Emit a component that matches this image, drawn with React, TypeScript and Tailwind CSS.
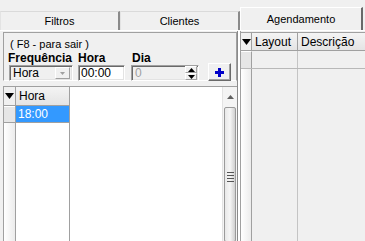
import React from "react";

const sunken = "border border-t-[#a0a0a0] border-l-[#a0a0a0] border-b-white border-r-white shadow-[inset_1px_1px_0_#696969,inset_-1px_-1px_0_#e3e3e3]";

function Tab({ label, width, active }: { label: string; width: string; active?: boolean }) {
    if (active) {
        return (
            <div className={`${width} h-[23px] -mb-[2px] flex items-start justify-center pt-[3px] bg-[#f0f0f0] border-t border-l border-white border-r-2 border-r-[#696969] relative z-10`}>
                {label}
            </div>
        );
    }
    return (
        <div className={`${width} h-[19px] mt-[2px] flex items-center justify-center bg-[#f0f0f0] border-t border-l border-[#e3e3e3] border-t-[#dadada] border-r-2 border-r-[#8a8a8a]`}>
            {label}
        </div>
    );
}

function HeaderArrow() {
    return (
        <svg width="9" height="6" viewBox="0 0 9 6">
            <path d="M0 0 H9 L4.5 6 Z" fill="#000" />
        </svg>
    );
}

export default function App() {
    return (
        <div
            className="w-[365px] h-[241px] bg-[#f0f0f0] overflow-hidden text-[11px] text-black select-none"
            style={{ fontFamily: '"Liberation Sans", Arial, sans-serif' }}
        >
            {/* tabs */}
            <div className="h-[9px]" />
            <div className="flex h-[21px] items-start">
                <Tab label="Filtros" width="w-[120px]" />
                <Tab label="Clientes" width="w-[120px]" />
                <div className="w-[123px] -mt-[2px]">
                    <Tab label="Agendamento" width="w-[123px]" active />
                </div>
            </div>
            <div className="h-px bg-white" />

            <div className="flex h-[211px]">
                {/* left side */}
                <div className="w-[237px] flex flex-col pl-[3px] pt-px">
                    <div className="h-[49px] border border-[#a0a0a0] border-b-white border-r-[#a0a0a0] pl-[5px] pt-[5px]">
                        <div className="leading-[13px] pl-[1px]">( F8 - para sair )</div>
                        <div className="flex mt-px">
                            <div className="w-[69px]">
                                <div className="font-bold text-[12px] leading-[12px] -ml-px">Frequência</div>
                                <div className={`mt-px w-[64px] h-[16px] ${sunken} bg-[#f0f0f0] flex items-center text-[12px]`}>
                                    <span className="pl-[3px] flex-1 leading-[12px]">Hora</span>
                                    <div className="w-[15px] h-[12px] mr-[2px] bg-[#f0f0f0] border border-white border-r-[#a0a0a0] border-b-[#a0a0a0] flex items-center justify-center">
                                        <svg width="5" height="3" viewBox="0 0 5 3">
                                            <path d="M0 0 H5 L2.5 3 Z" fill="#a0a0a0" />
                                        </svg>
                                    </div>
                                </div>
                            </div>
                            <div className="w-[53px]">
                                <div className="font-bold text-[12px] leading-[12px]">Hora</div>
                                <div className={`mt-px w-[47px] h-[16px] ${sunken} bg-white flex items-center pl-[2px] leading-[12px] text-[12px]`}>00:00</div>
                            </div>
                            <div className="w-[77px]">
                                <div className="font-bold text-[12px] leading-[12px] pl-px">Dia</div>
                                <div className={`mt-px w-[68px] h-[16px] ${sunken} bg-[#f0f0f0] flex items-center text-[12px]`}>
                                    <span className="pl-[3px] flex-1 text-[#a0a0a0] leading-[12px]">0</span>
                                    <div className="w-[12px] h-[14px] mr-px flex flex-col">
                                        <div className="flex-1 border border-white border-r-[#a0a0a0] border-b-[#a0a0a0] flex items-center justify-center">
                                            <svg width="7" height="4" viewBox="0 0 7 4">
                                                <path d="M0 4 H7 L3.5 0 Z" fill="#000" />
                                            </svg>
                                        </div>
                                        <div className="flex-1 border border-white border-r-[#a0a0a0] border-b-[#a0a0a0] flex items-center justify-center">
                                            <svg width="7" height="4" viewBox="0 0 7 4">
                                                <path d="M0 0 H7 L3.5 4 Z" fill="#000" />
                                            </svg>
                                        </div>
                                    </div>
                                </div>
                            </div>
                            <div className="w-[23px] h-[18px] -mt-px self-end bg-[#f0f0f0] border border-white border-r-[#696969] border-b-[#696969] shadow-[inset_-1px_-1px_0_#a0a0a0] flex items-center justify-center">
                                <svg width="9" height="9" viewBox="0 0 9 9">
                                    <path d="M3 0 H6 V3 H9 V6 H6 V9 H3 V6 H0 V3 H3 Z" fill="#0000c8" />
                                </svg>
                            </div>
                        </div>
                    </div>

                    {/* hours grid */}
                    <div className="mt-[5px] flex-1 flex border-t border-l border-[#a0a0a0] bg-white">
                        <div className="w-[12px] flex flex-col border-r border-[#a0a0a0]">
                            <div className="h-[19px] bg-[#f0f0f0] border-b border-[#a0a0a0] flex items-center justify-center">
                                <HeaderArrow />
                            </div>
                            <div className="h-[17px] bg-[#e6e6e6] border-b border-[#a0a0a0] border-t border-t-white" />
                            <div className="flex-1 bg-gradient-to-r from-white to-[#ececec]" />
                        </div>
                        <div className="w-[54px] flex flex-col border-r border-[#a0a0a0]">
                            <div className="h-[19px] bg-gradient-to-b from-[#f4f4f4] to-[#e4e4e4] border-b border-[#a0a0a0] flex items-center pl-[3px] text-[12px]">Hora</div>
                            <div className="h-[17px] bg-[#3399ff] text-white border-b border-[#a0a0a0] flex items-center pl-[2px] text-[12px]">18:00</div>
                            <div className="flex-1" />
                        </div>
                        <div className="flex-1" />
                        <div className="w-[15px] flex flex-col bg-[#f4f4f4] border-l border-[#e3e3e3]">
                            <div className="h-[19px] flex items-center justify-center">
                                <svg width="7" height="4" viewBox="0 0 7 4">
                                    <path d="M0 4 H7 L3.5 0 Z" fill="#606060" />
                                </svg>
                            </div>
                            <div className="flex-1 mt-px mx-px rounded-[2px] border border-[#9a9a9a] bg-gradient-to-r from-[#e8e8e8] via-[#f6f6f6] to-[#d0d0d0] flex flex-col items-center pt-[64px] gap-[2px]">
                                <div className="w-[7px] h-px bg-[#555]" />
                                <div className="w-[7px] h-px bg-[#555]" />
                                <div className="w-[7px] h-px bg-[#555]" />
                                <div className="w-[7px] h-px bg-[#555]" />
                            </div>
                        </div>
                    </div>
                </div>

                {/* splitter */}
                <div className="w-[4px] flex">
                    <div className="w-px bg-[#8a8a8a]" />
                    <div className="w-[2px] bg-white" />
                    <div className="w-px bg-[#a0a0a0]" />
                </div>

                {/* right grid */}
                <div className="flex-1 flex flex-col pt-px">
                    <div className="flex h-[19px] border-t border-[#a0a0a0]">
                        <div className="w-[11px] bg-[#f0f0f0] border-r border-b border-[#a0a0a0] flex items-center justify-center">
                            <HeaderArrow />
                        </div>
                        <div className="w-[46px] bg-gradient-to-b from-[#f4f4f4] to-[#e4e4e4] border-r border-b border-[#a0a0a0] flex items-center pl-[3px] text-[12px]">Layout</div>
                        <div className="flex-1 bg-gradient-to-b from-[#f4f4f4] to-[#e4e4e4] border-b border-[#a0a0a0] flex items-center pl-[3px] text-[12px]">Descrição</div>
                    </div>
                    <div className="flex h-[18px] border-b border-[#b8b8b8]">
                        <div className="w-[11px] bg-[#e6e6e6] border-r border-[#a0a0a0] border-t border-t-white" />
                        <div className="w-[46px] border-r border-[#c4c4c4]" />
                        <div className="flex-1" />
                    </div>
                    <div className="flex flex-1">
                        <div className="w-[11px] bg-gradient-to-r from-white to-[#ececec] border-r border-[#a0a0a0]" />
                        <div className="w-[46px] border-r border-[#c4c4c4]" />
                        <div className="flex-1" />
                    </div>
                </div>
            </div>
        </div>
    );
}
